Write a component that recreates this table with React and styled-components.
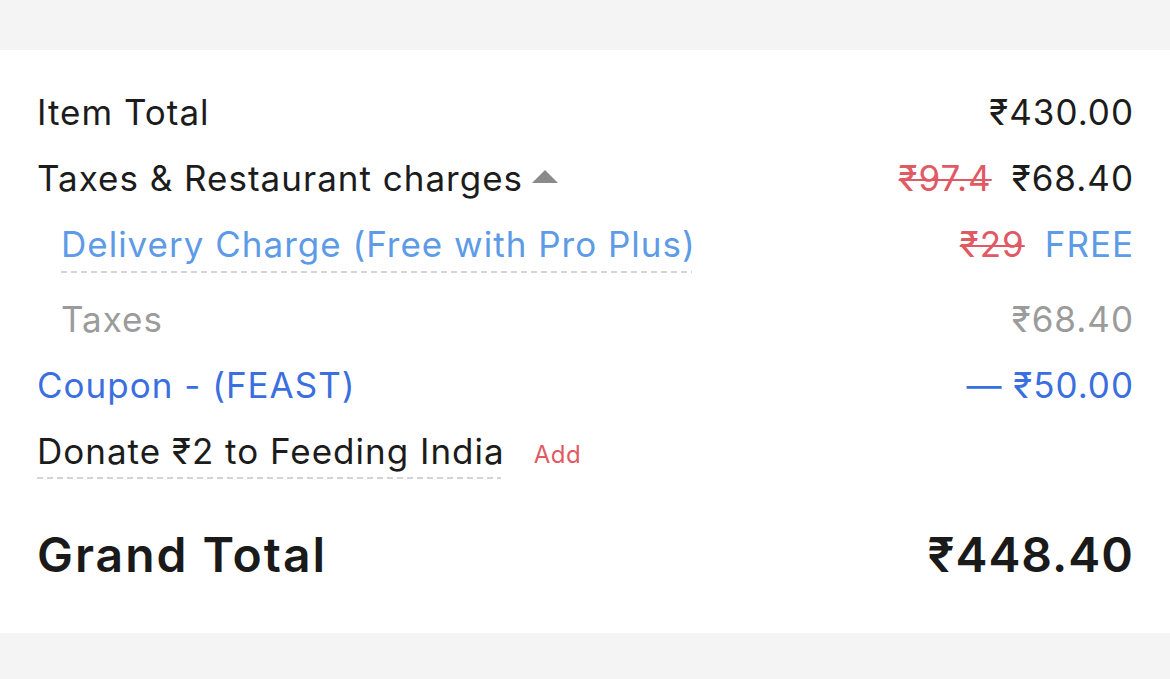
import React from "react";
import styled, { createGlobalStyle } from "styled-components";

const Global = createGlobalStyle`
  html, body { margin: 0; padding: 0; background: #f4f4f5; }
  body { font-family: "Inter", "Noto Sans", sans-serif; -webkit-font-smoothing: antialiased; }
`;

const Page = styled.div`
  padding-top: 50px;
  min-height: 679px;
  box-sizing: border-box;
`;

const Card = styled.section`
  background: #ffffff;
  height: 583px;
  box-sizing: border-box;
  padding: 29px 37px 0 37px;
  display: flex;
  flex-direction: column;
`;

const Row = styled.div`
  display: flex;
  align-items: center;
  justify-content: space-between;
  height: ${(p) => p.$h || 66}px;
  flex-shrink: 0;
  padding-left: ${(p) => (p.$indent ? 24 : 0)}px;
  margin-top: ${(p) => p.$mt || 0}px;
  margin-bottom: ${(p) => p.$mb || 0}px;
  font-size: 35px;
  letter-spacing: 1px;
  font-weight: 400;
  color: ${(p) => p.$color || "#1c1c1c"};
  white-space: nowrap;
`;

const TotalRow = styled(Row)`
  font-size: 48px;
  font-weight: 600;
  letter-spacing: 2px;
  color: #1a1a1a;
`;

const Label = styled.span`
  display: inline-flex;
  align-items: center;
  position: relative;
`;

const DashedLabel = styled(Label)`
  &::after {
    content: "";
    position: absolute;
    left: 0;
    right: 4px;
    bottom: ${(p) => p.$offset ?? -5}px;
    height: 2px;
    background-image: linear-gradient(to right, #d4d4d4 0 6px, transparent 6px 10px);
    background-size: 10px 2px;
  }
`;

const LabelGroup = styled.span`
  display: inline-flex;
  align-items: center;
`;

const Caret = styled.svg`
  width: 26px;
  height: 13px;
  margin-left: 9px;
  margin-top: -4px;
`;

const AddLink = styled.span`
  font-size: 24px;
  letter-spacing: 0.5px;
  color: #df5a63;
  margin-left: 29px;
  margin-top: 6px;
`;

const Value = styled.span`
  display: inline-flex;
  align-items: baseline;
  gap: 20px;
  margin-right: -1px;
`;

const TotalValue = styled(Value)`
  letter-spacing: 1px;
`;

const Strike = styled.span`
  color: #df5a63;
  text-decoration: line-through;
  text-decoration-thickness: 2px;
`;

const Free = styled.span`
  color: #5d9be6;
`;

export default function App() {
  return (
    <>
      <Global />
      <Page>
        <Card>
          <Row>
            <Label>Item Total</Label>
            <Value>₹430.00</Value>
          </Row>
          <Row>
            <Label>
              Taxes &amp; Restaurant charges
              <Caret viewBox="0 0 26 13">
                <polygon points="0,13 13,0 26,13" fill="#8a8a8a" />
              </Caret>
            </Label>
            <Value>
              <Strike>₹97.4</Strike>
              <span>₹68.40</span>
            </Value>
          </Row>
          <Row $indent $mb={9} $color="#5d9be6">
            <DashedLabel $offset={-8}>Delivery Charge (Free with Pro Plus)</DashedLabel>
            <Value>
              <Strike>₹29</Strike>
              <Free>FREE</Free>
            </Value>
          </Row>
          <Row $indent $color="#9b9b9b">
            <Label>Taxes</Label>
            <Value>₹68.40</Value>
          </Row>
          <Row $color="#3b6fe0">
            <Label>Coupon - (FEAST)</Label>
            <Value>— ₹50.00</Value>
          </Row>
          <Row>
            <LabelGroup>
              <DashedLabel $offset={-7}>Donate ₹2 to Feeding India</DashedLabel>
              <AddLink>Add</AddLink>
            </LabelGroup>
          </Row>
          <TotalRow $h={70} $mt={35}>
            <Label>Grand Total</Label>
            <TotalValue>₹448.40</TotalValue>
          </TotalRow>
        </Card>
      </Page>
    </>
  );
}
